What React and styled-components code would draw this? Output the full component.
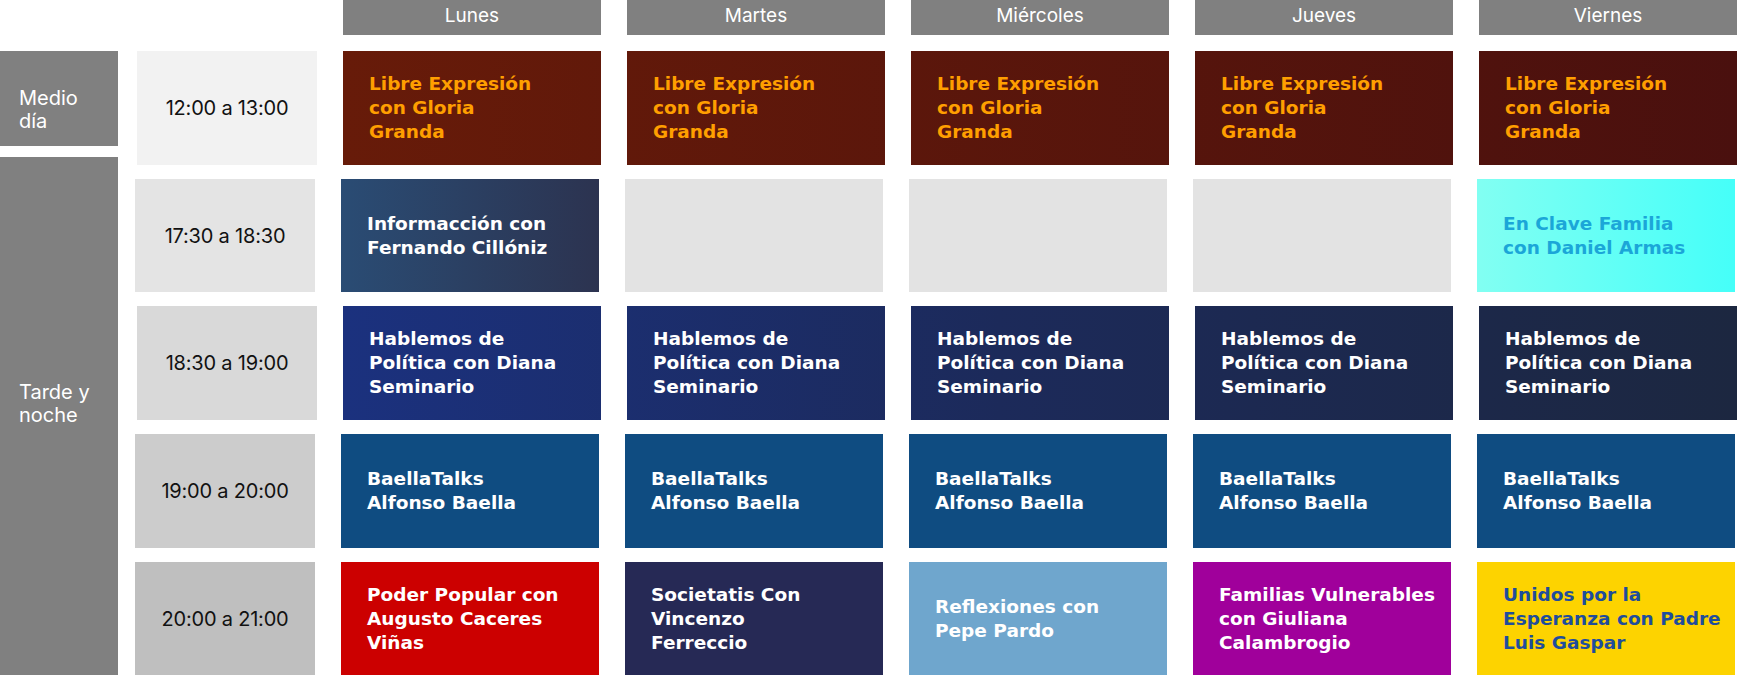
import React from 'react'
import styled, { createGlobalStyle } from 'styled-components'

const GlobalStyle = createGlobalStyle`
  html, body {
    margin: 0;
    padding: 0;
    background: #ffffff;
    overflow: hidden;
  }
  body {
    font-family: "Inter", "Liberation Sans", sans-serif;
  }
`;

const Page = styled.div`
  display: flex;
  flex-direction: row;
  gap: 19px;
  width: 1737px;
  height: 675px;
`;

const LabelColumn = styled.div`
  display: flex;
  flex-direction: column;
  gap: 11px;
  width: 120px;
  padding-top: 51px;
  box-sizing: border-box;
`;

const Period = styled.div`
  display: flex;
  align-items: center;
  background: #808080;
  color: #ffffff;
  font-size: 20px;
  line-height: 23px;
  padding: ${p => p.$top || '0'} 0 ${p => p.$bottom || '0'} 19px;
  box-sizing: border-box;
  height: ${p => p.$height || 'auto'};
  flex: ${p => (p.$grow ? 1 : 'none')};
`;

const Grid = styled.div`
  display: grid;
  grid-template-columns: 180px repeat(5, 258px);
  grid-template-rows: 37px 114px 113px 114px 114px 113px;
  column-gap: 26px;
  row-gap: 14px;
`;

const DayHead = styled.div`
  display: flex;
  align-items: center;
  justify-content: center;
  height: 35px;
  padding-bottom: 5px;
  box-sizing: border-box;
  background: #808080;
  color: #ffffff;
  font-size: 19px;
`;

const TimeCell = styled.div`
  display: flex;
  align-items: center;
  justify-content: center;
  margin: 0 ${p => -p.$nudge}px 0 ${p => p.$nudge}px;
  background: ${p => p.$shade};
  color: #111111;
  font-size: 20px;
  letter-spacing: -0.2px;
`;

const Show = styled.div`
  display: flex;
  align-items: center;
  padding-left: 26px;
  margin: 0 ${p => -p.$nudge}px 0 ${p => p.$nudge}px;
  background: ${p => p.$bg};
  color: ${p => p.$color || '#ffffff'};
  font-family: "DejaVu Sans", "Inter", sans-serif;
  font-size: 18.5px;
  font-weight: 700;
  line-height: 24px;
  white-space: nowrap;
`;

const libre = {
  lines: ['Libre Expresión', 'con Gloria', 'Granda'],
  bg: 'linear-gradient(90deg, #671b09 345px, #4a100e 1737px) fixed',
  color: '#ff9f00',
};
const hablemos = {
  lines: ['Hablemos de', 'Política con Diana', 'Seminario'],
  bg: 'linear-gradient(90deg, #1b317e 345px, #1c2a5a 1000px, #1c2740 1737px) fixed',
};
const baella = { lines: ['BaellaTalks', 'Alfonso Baella'], bg: '#0f4c81' };
const empty = { lines: [], bg: '#e3e3e3' };

const days = ['Lunes', 'Martes', 'Miércoles', 'Jueves', 'Viernes'];

const rows = [
  { time: '12:00 a 13:00', shade: '#f2f2f2', nudge: 0, shows: [libre, libre, libre, libre, libre] },
  {
    time: '17:30 a 18:30',
    shade: '#e4e4e4',
    nudge: -2,
    shows: [
      { lines: ['Informacción con', 'Fernando Cillóniz'], bg: 'linear-gradient(90deg, #2a4c74, #2c3350)' },
      empty,
      empty,
      empty,
      {
        lines: ['En Clave Familia', 'con Daniel Armas'],
        bg: 'linear-gradient(90deg, #82fff2, #45fff9)',
        color: '#1ba6d8',
      },
    ],
  },
  { time: '18:30 a 19:00', shade: '#d9d9d9', nudge: 0, shows: [hablemos, hablemos, hablemos, hablemos, hablemos] },
  { time: '19:00 a 20:00', shade: '#cccccc', nudge: -2, shows: [baella, baella, baella, baella, baella] },
  {
    time: '20:00 a 21:00',
    shade: '#bfbfbf',
    nudge: -2,
    shows: [
      { lines: ['Poder Popular con', 'Augusto Caceres', 'Viñas'], bg: '#cc0000' },
      { lines: ['Societatis Con', 'Vincenzo', 'Ferreccio'], bg: '#262955' },
      { lines: ['Reflexiones con', 'Pepe Pardo'], bg: '#6fa6cd' },
      { lines: ['Familias Vulnerables', 'con Giuliana', 'Calambrogio'], bg: '#a0009b' },
      { lines: ['Unidos por la', 'Esperanza con Padre', 'Luis Gaspar'], bg: '#fdd300', color: '#1f4d9c' },
    ],
  },
];

export default function App() {
  return (
    <>
      <GlobalStyle />
      <Page>
        <LabelColumn>
          <Period $height="95px" $top="22px">Medio<br />día</Period>
          <Period $grow $bottom="24px">Tarde y<br />noche</Period>
        </LabelColumn>
        <Grid>
          <div />
          {days.map(d => (
            <DayHead key={d}>{d}</DayHead>
          ))}
          {rows.map(row => (
            <React.Fragment key={row.time}>
              <TimeCell $shade={row.shade} $nudge={row.nudge}>{row.time}</TimeCell>
              {row.shows.map((s, i) => (
                <Show key={i} $bg={s.bg} $color={s.color} $nudge={row.nudge}>
                  <div>
                    {s.lines.map((l, j) => (
                      <React.Fragment key={j}>
                        {j > 0 && <br />}
                        {l}
                      </React.Fragment>
                    ))}
                  </div>
                </Show>
              ))}
            </React.Fragment>
          ))}
        </Grid>
      </Page>
    </>
  )
}
